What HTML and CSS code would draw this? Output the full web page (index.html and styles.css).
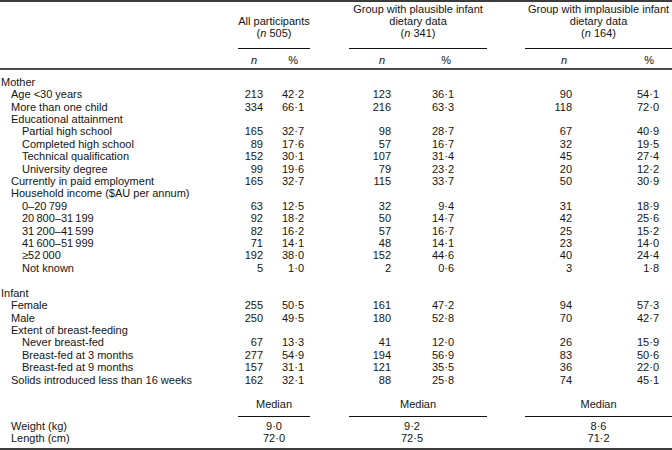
FILE: index.html
```html
<!DOCTYPE html>
<html lang="en">
<head>
<meta charset="utf-8">
<title>Participant characteristics</title>
<link rel="stylesheet" href="styles.css">
</head>
<body>
<table class="tb">
  <colgroup>
    <col class="w-label"><col class="w-g1"><col class="w-g1"><col class="w-sp1">
    <col class="w-g2"><col class="w-g2"><col class="w-sp2"><col class="w-g3n"><col class="w-g3p">
  </colgroup>
  <thead>
    <tr class="h1">
      <th></th>
      <th colspan="2" class="grp">All participants<br>(<i>n</i> 505)</th>
      <th></th>
      <th colspan="2" class="grp">Group with plausible infant<br>dietary data<br>(<i>n</i> 341)</th>
      <th></th>
      <th colspan="2" class="grp">Group with implausible infant<br>dietary data<br>(<i>n</i> 164)</th>
    </tr>
    <tr class="h2">
      <th></th><th><i>n</i></th><th>%</th><th></th>
      <th><i>n</i></th><th>%</th><th></th>
      <th><i>n</i></th><th>%</th>
    </tr>
  </thead>
  <tbody>
    <tr class="first"><td class="s0" colspan="9">Mother</td></tr>
    <tr><td class="s1">Age &lt;30 years</td><td>213</td><td>42·2</td><td></td><td>123</td><td>36·1</td><td></td><td>90</td><td>54·1</td></tr>
    <tr><td class="s1">More than one child</td><td>334</td><td>66·1</td><td></td><td>216</td><td>63·3</td><td></td><td>118</td><td>72·0</td></tr>
    <tr><td class="s1" colspan="9">Educational attainment</td></tr>
    <tr><td class="s2">Partial high school</td><td>165</td><td>32·7</td><td></td><td>98</td><td>28·7</td><td></td><td>67</td><td>40·9</td></tr>
    <tr><td class="s2">Completed high school</td><td>89</td><td>17·6</td><td></td><td>57</td><td>16·7</td><td></td><td>32</td><td>19·5</td></tr>
    <tr><td class="s2">Technical qualification</td><td>152</td><td>30·1</td><td></td><td>107</td><td>31·4</td><td></td><td>45</td><td>27·4</td></tr>
    <tr><td class="s2">University degree</td><td>99</td><td>19·6</td><td></td><td>79</td><td>23·2</td><td></td><td>20</td><td>12·2</td></tr>
    <tr><td class="s1">Currently in paid employment</td><td>165</td><td>32·7</td><td></td><td>115</td><td>33·7</td><td></td><td>50</td><td>30·9</td></tr>
    <tr><td class="s1" colspan="9">Household income ($AU per annum)</td></tr>
    <tr><td class="s2">0–20&#8201;799</td><td>63</td><td>12·5</td><td></td><td>32</td><td>9·4</td><td></td><td>31</td><td>18·9</td></tr>
    <tr><td class="s2">20&#8201;800–31&#8201;199</td><td>92</td><td>18·2</td><td></td><td>50</td><td>14·7</td><td></td><td>42</td><td>25·6</td></tr>
    <tr><td class="s2">31&#8201;200–41&#8201;599</td><td>82</td><td>16·2</td><td></td><td>57</td><td>16·7</td><td></td><td>25</td><td>15·2</td></tr>
    <tr><td class="s2">41&#8201;600–51&#8201;999</td><td>71</td><td>14·1</td><td></td><td>48</td><td>14·1</td><td></td><td>23</td><td>14·0</td></tr>
    <tr><td class="s2">≥52&#8201;000</td><td>192</td><td>38·0</td><td></td><td>152</td><td>44·6</td><td></td><td>40</td><td>24·4</td></tr>
    <tr><td class="s2">Not known</td><td>5</td><td>1·0</td><td></td><td>2</td><td>0·6</td><td></td><td>3</td><td>1·8</td></tr>
    <tr class="blank"><td colspan="9"></td></tr>
    <tr><td class="s0" colspan="9">Infant</td></tr>
    <tr><td class="s1">Female</td><td>255</td><td>50·5</td><td></td><td>161</td><td>47·2</td><td></td><td>94</td><td>57·3</td></tr>
    <tr><td class="s1">Male</td><td>250</td><td>49·5</td><td></td><td>180</td><td>52·8</td><td></td><td>70</td><td>42·7</td></tr>
    <tr><td class="s1" colspan="9">Extent of breast-feeding</td></tr>
    <tr><td class="s2">Never breast-fed</td><td>67</td><td>13·3</td><td></td><td>41</td><td>12·0</td><td></td><td>26</td><td>15·9</td></tr>
    <tr><td class="s2">Breast-fed at 3 months</td><td>277</td><td>54·9</td><td></td><td>194</td><td>56·9</td><td></td><td>83</td><td>50·6</td></tr>
    <tr><td class="s2">Breast-fed at 9 months</td><td>157</td><td>31·1</td><td></td><td>121</td><td>35·5</td><td></td><td>36</td><td>22·0</td></tr>
    <tr><td class="s1">Solids introduced less than 16 weeks</td><td>162</td><td>32·1</td><td></td><td>88</td><td>25·8</td><td></td><td>74</td><td>45·1</td></tr>
    <tr class="blank"><td colspan="9"></td></tr>
    <tr class="med"><td></td><td colspan="2" class="mh">Median</td><td></td><td colspan="2" class="mh">Median</td><td></td><td colspan="2" class="mh">Median</td></tr>
    <tr class="wt"><td class="s1">Weight (kg)</td><td colspan="2" class="mv">9·0</td><td></td><td colspan="2" class="mv mv2">9·2</td><td></td><td colspan="2" class="mv">8·6</td></tr>
    <tr class="ln"><td class="s1">Length (cm)</td><td colspan="2" class="mv">72·0</td><td></td><td colspan="2" class="mv mv2">72·5</td><td></td><td colspan="2" class="mv">71·2</td></tr>
  </tbody>
</table>
</body>
</html>
```

FILE: styles.css
```css
html, body {
  margin: 0;
  padding: 0;
  background: #ffffff;
}

body {
  font-family: "Liberation Sans", Arial, Helvetica, sans-serif;
  font-size: 11px;
  color: #141414;
}

.tb {
  width: 672px;
  table-layout: fixed;
  border-collapse: separate;
  border-spacing: 0;
  border-top: 2px solid #3c3c3c;
  border-bottom: 2px solid #3c3c3c;
}

.w-label { width: 238px; }
.w-g1 { width: 36px; }
.w-sp1 { width: 39px; }
.w-g2 { width: 69px; }
.w-sp2 { width: 38px; }
.w-g3n { width: 73px; }
.w-g3p { width: 74px; }

.tb th,
.tb td {
  padding: 0;
  font-weight: normal;
  white-space: nowrap;
}

/* header */
.h1 th {
  vertical-align: bottom;
  line-height: 12px;
  padding-top: 1px;
  padding-bottom: 8.5px;
}

.h1 th.grp {
  text-align: center;
  border-bottom: 1px solid #111;
}

.h1 th:not(.grp) {
  border-bottom: 1px solid transparent;
}

.h2 th {
  line-height: 12.4px;
  padding-top: 5.3px;
  padding-bottom: 1.3px;
  border-bottom: 2px solid #4a4a4a;
  text-align: right;
}

.h2 th:nth-child(2) { padding-right: 17px; }
.h2 th:nth-child(3) { padding-right: 12px; }
.h2 th:nth-child(5) { padding-right: 33px; }
.h2 th:nth-child(6) { padding-right: 36px; }
.h2 th:nth-child(8) { padding-right: 31px; }
.h2 th:nth-child(9) { padding-right: 18px; }

/* body */
.tb tbody td {
  line-height: 12.4px;
  text-align: right;
}

.tb tbody td:nth-child(2) { padding-right: 11px; }
.tb tbody td:nth-child(3) { padding-right: 6px; }
.tb tbody td:nth-child(5) { padding-right: 27px; }
.tb tbody td:nth-child(6) { padding-right: 33px; }
.tb tbody td:nth-child(8) { padding-right: 26px; }
.tb tbody td:nth-child(9) { padding-right: 13px; }

.tb tbody td.s0 { text-align: left; padding-left: 1px; }
.tb tbody td.s1 { text-align: left; padding-left: 11px; }
.tb tbody td.s2 { text-align: left; padding-left: 22px; }

.tb tbody tr.first td { padding-top: 6.3px; }

.tb tbody tr.blank td { height: 12.4px; }

.tb tbody td.mh {
  text-align: center;
  padding: 0 0 5.5px 0;
  border-bottom: 1px solid #111;
}

.tb tbody tr.med td { padding-bottom: 5.5px; }

.tb tbody td.mv {
  text-align: center;
  padding: 0;
}

.tb tbody td.mv2 { padding-right: 12px; }

.tb tbody tr.wt td { padding-top: 2.5px; }
.tb tbody tr.ln td { padding-bottom: 3px; }
```
